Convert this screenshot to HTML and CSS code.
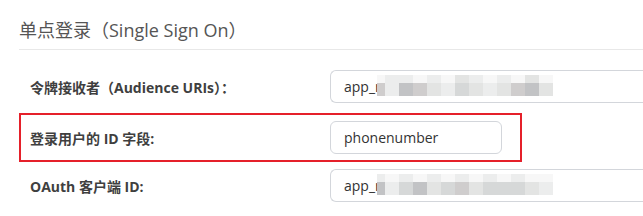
FILE: index.html
```html
<!DOCTYPE html>
<html lang="zh-CN">
<head>
    <meta charset="UTF-8">
    <title>单点登录</title>
    <link rel="stylesheet" href="styles.css">
</head>
<body>
    <div class="panel">
        <h2 class="panel-title">单点登录（Single Sign On）</h2>

        <div class="form-row">
            <label class="form-label">令牌接收者（Audience URIs）：</label>
            <div class="form-input wide">
                <span class="value">app_r</span>
                <span class="mosaic">
                    <i class="c0"></i><i class="c1"></i><i class="c1"></i><i class="c0"></i><i class="c1"></i><i class="c0"></i><i class="c2"></i><i class="c1"></i><i class="c0"></i><i class="c1"></i><i class="c0"></i><i class="c2"></i><i class="c0"></i>
                    <i class="c4"></i><i class="c1"></i><i class="c5"></i><i class="c4"></i><i class="c2"></i><i class="c1"></i><i class="c3"></i><i class="c2"></i><i class="c1"></i><i class="c2"></i><i class="c4"></i><i class="c5"></i><i class="c2"></i>
                </span>
            </div>
        </div>

        <div class="form-row highlight">
            <label class="form-label">登录用户的 ID 字段:</label>
            <div class="form-input short">
                <span class="value">phonenumber</span>
            </div>
        </div>

        <div class="form-row">
            <label class="form-label">OAuth 客户端 ID:</label>
            <div class="form-input wide">
                <span class="value">app_r</span>
                <span class="mosaic">
                    <i class="c1"></i><i class="c0"></i><i class="c1"></i><i class="c0"></i><i class="c1"></i><i class="c0"></i><i class="c1"></i><i class="c0"></i><i class="c1"></i><i class="c0"></i><i class="c1"></i><i class="c0"></i><i class="c0"></i>
                    <i class="c5"></i><i class="c1"></i><i class="c3"></i><i class="c5"></i><i class="c2"></i><i class="c3"></i><i class="c4"></i><i class="c2"></i><i class="c3"></i><i class="c3"></i><i class="c3"></i><i class="c2"></i><i class="c1"></i>
                </span>
            </div>
        </div>
    </div>
</body>
</html>
```

FILE: styles.css
```css
html, body {
    margin: 0;
    padding: 0;
    background: #fff;
    overflow: hidden;
}
body {
    font-family: "Open Sans", "Noto Sans CJK SC", sans-serif;
    color: #444;
}
.panel {
    padding: 18px 0 0 19px;
    overflow: hidden;
}
.panel-title {
    margin: 0;
    font-size: 18px;
    line-height: 24px;
    font-weight: normal;
    color: #555;
    padding-bottom: 7px;
    border-bottom: 1px solid #e8e8e8;
}
.form-row {
    display: flex;
    align-items: center;
    padding-left: 11px;
    margin-top: 20px;
}
.form-row.highlight {
    width: 474px;
    margin-top: 10px;
    padding: 6px 16px 6px 9px;
    border: 2px solid #e5202a;
}
.form-row.highlight + .form-row {
    margin-top: 7px;
}
.form-label {
    width: 300px;
    flex-shrink: 0;
    font-size: 14px;
    font-weight: bold;
    color: #3f3f3f;
}
.form-input {
    box-sizing: border-box;
    height: 33px;
    border: 1px solid #d3d6db;
    border-radius: 6px;
    display: flex;
    align-items: center;
    padding-left: 13px;
    font-size: 14px;
    color: #333;
    flex-shrink: 0;
}
.form-input.wide {
    width: 316px;
    border-right: none;
    border-radius: 6px 0 0 6px;
}
.form-input.short {
    width: 172px;
}
.mosaic {
    display: grid;
    grid-template-columns: 8px repeat(12, 14px);
    grid-template-rows: 8px 13px;
    margin-left: -4px;
    margin-top: -3px;
}
.mosaic i {
    display: block;
}
.c0 { background: #f7f7f7; }
.c1 { background: #eceded; }
.c2 { background: #e3e4e3; }
.c3 { background: #d6d8d8; }
.c4 { background: #cfcdcd; }
.c5 { background: #c2c3c5; }
```
